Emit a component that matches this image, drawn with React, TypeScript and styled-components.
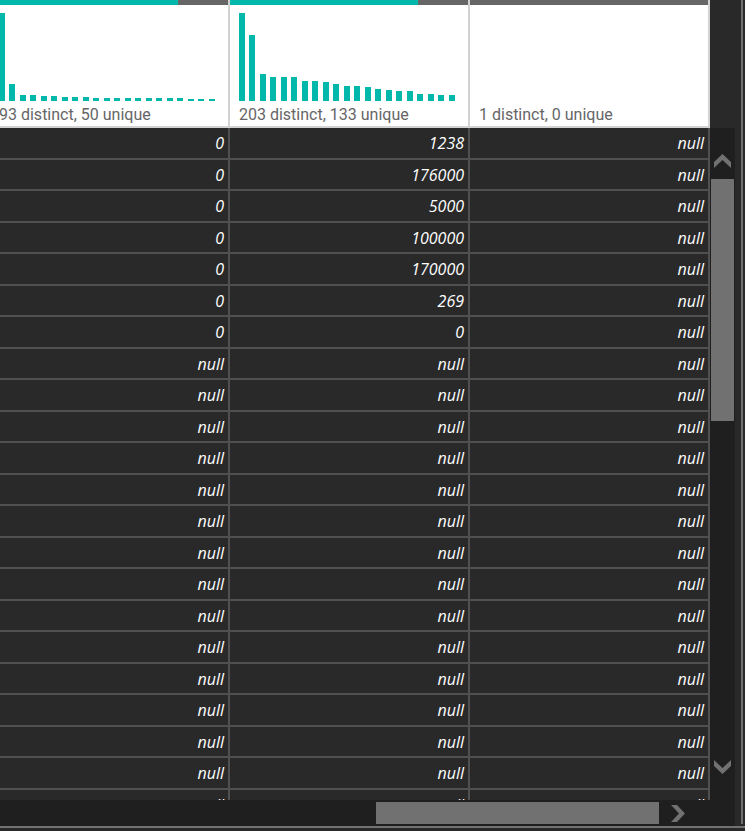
import React from "react";
import styled, { createGlobalStyle } from "styled-components";

const color = {
  surface: "#292929",
  track: "#1f1f1f",
  thumb: "#717171",
  frame: "#717171",
  grid: "#505050",
  headerLine: "#d2d2d2",
  teal: "#01b8aa",
  gray: "#666666",
};

const GlobalStyle = createGlobalStyle`
  *, *::before, *::after { box-sizing: border-box; }
  body { margin: 0; background: ${color.surface}; }
`;

const Page = styled.div`
  display: flex;
  flex-direction: column;
  height: 100vh;
  padding-bottom: 3px;
  overflow: hidden;
  background: ${color.surface};
`;

const Frame = styled.main`
  display: flex;
  flex: 1;
  min-height: 0;
  padding-right: 2px;
  border-bottom: 2px solid ${color.frame};
`;

const Preview = styled.section`
  display: flex;
  flex: 1;
  flex-direction: column;
  min-width: 0;
`;

const FrameEdge = styled.div`
  width: 8px;
  margin-bottom: 2px;
  border-right: 2px solid ${color.frame};
`;

const Body = styled.div`
  display: flex;
  flex: 1;
  min-height: 0;
`;

const Viewport = styled.div`
  display: flex;
  flex: 1;
  justify-content: flex-end;
  min-width: 0;
  overflow: hidden;
`;

const Table = styled.table`
  flex: none;
  align-self: flex-start;
  width: 720px;
  table-layout: fixed;
  border-collapse: separate;
  border-spacing: 0;
`;

const HeaderCell = styled.th`
  height: 128px;
  padding: 0;
  vertical-align: top;
  text-align: left;
  background: #ffffff;
  border-right: 2px solid ${color.headerLine};
  border-bottom: 2px solid ${color.headerLine};
`;

const QualityBar = styled.div<{ $valid: number }>`
  height: 5px;
  background: linear-gradient(to right, ${color.teal} ${(p) => p.$valid}%, ${color.gray} ${(p) => p.$valid}%);
`;

const Chart = styled.svg`
  display: block;
  width: 220px;
  height: 88px;
  margin: 8px 0 0 9px;
  fill: ${color.teal};
`;

const Summary = styled.div`
  padding: 4px 9px 0;
  font: 400 16px/20px Roboto, sans-serif;
  color: ${color.gray};
  white-space: nowrap;
`;

const Row = styled.tr`
  height: 31px;
  &:nth-child(odd) { height: 32px; }
`;

const Cell = styled.td`
  padding: 0 4px 0 0;
  font: italic 500 16px/28px "Open Sans", sans-serif;
  color: #ffffff;
  text-align: right;
  background: ${color.surface};
  border-right: 2px solid ${color.grid};
  border-bottom: 2px solid ${color.grid};
`;

const SideRail = styled.div`
  display: flex;
  flex-direction: column;
  width: 25px;
  padding-top: 128px;
`;

const VerticalBar = styled.div`
  display: flex;
  flex: 1;
  flex-direction: column;
  min-height: 0;
  padding: 26px 1px;
  background: ${color.track};
`;

const HorizontalBar = styled.div`
  display: flex;
  height: 26px;
  padding: 2px 39px 2px 0;
  background: ${color.track};
`;

const ArrowButton = styled.button<{ $side?: boolean }>`
  display: flex;
  flex: none;
  align-items: center;
  justify-content: center;
  width: ${(p) => (p.$side ? "37px" : "23px")};
  height: ${(p) => (p.$side ? "22px" : "14px")};
  padding: 0;
  border: 0;
  background: transparent;
  color: ${color.thumb};
`;

const VerticalTrack = styled.div`
  flex: 1;
  min-height: 0;
  margin: 11px 0;
`;

const VerticalThumb = styled.div`
  height: 42.4%;
  background: ${color.thumb};
`;

const HorizontalTrack = styled.div`
  display: flex;
  flex: 1;
  justify-content: flex-end;
`;

const HorizontalThumb = styled.div`
  width: 43%;
  background: ${color.thumb};
`;

const Icon = styled.svg`
  display: block;
  fill: currentColor;
`;

type Column = { name: string; valid: number; summary: string; bars: number[] };

const columns: Column[] = [
  {
    name: "first",
    valid: 79,
    summary: "93 distinct, 50 unique",
    bars: [88, 17, 6, 6, 5, 5, 4, 4, 4, 3, 3, 3, 3, 3, 3, 3, 3, 3, 2, 2, 2],
  },
  {
    name: "second",
    valid: 79,
    summary: "203 distinct, 133 unique",
    bars: [88, 66, 27, 24, 24, 24, 20, 20, 19, 17, 15, 15, 14, 12, 11, 10, 10, 7, 7, 6, 6],
  },
  { name: "third", valid: 0, summary: "1 distinct, 0 unique", bars: [] },
];

const rows: string[][] = [
  ...["1238", "176000", "5000", "100000", "170000", "269", "0"].map((v) => ["0", v, "null"]),
  ...Array.from({ length: 15 }, () => ["null", "null", "null"]),
];

function Distribution({ bars }: { bars: number[] }) {
  return (
    <Chart viewBox="0 0 220 88" aria-hidden="true" shapeRendering="crispEdges">
      {bars.map((h, i) => (
        <rect key={i} x={Math.floor(i * 10.5)} y={88 - h} width={6} height={h} />
      ))}
    </Chart>
  );
}

export default function App() {
  return (
    <>
      <GlobalStyle />
      <Page>
        <Frame>
          <Preview>
            <Body>
              <Viewport id="preview-grid">
                <Table>
                  <thead>
                    <tr>
                      {columns.map((c) => (
                        <HeaderCell key={c.name} scope="col">
                          <QualityBar $valid={c.valid} />
                          <Distribution bars={c.bars} />
                          <Summary>{c.summary}</Summary>
                        </HeaderCell>
                      ))}
                    </tr>
                  </thead>
                  <tbody>
                    {rows.map((row, r) => (
                      <Row key={r}>
                        {row.map((value, c) => (
                          <Cell key={c}>{value}</Cell>
                        ))}
                      </Row>
                    ))}
                  </tbody>
                </Table>
              </Viewport>
              <SideRail>
                <VerticalBar>
                  <ArrowButton type="button" aria-label="Scroll up">
                    <Icon width="17" height="14" viewBox="0 0 17 14">
                      <path d="M8.5 0L17 8V14L8.5 6L0 14V8Z" />
                    </Icon>
                  </ArrowButton>
                  <VerticalTrack>
                    <VerticalThumb role="scrollbar" aria-label="Rows" aria-controls="preview-grid" aria-orientation="vertical" aria-valuenow={0} />
                  </VerticalTrack>
                  <ArrowButton type="button" aria-label="Scroll down">
                    <Icon width="17" height="14" viewBox="0 0 17 14">
                      <path d="M8.5 14L17 6V0L8.5 8L0 0V6Z" />
                    </Icon>
                  </ArrowButton>
                </VerticalBar>
              </SideRail>
            </Body>
            <HorizontalBar>
              <HorizontalTrack>
                <HorizontalThumb role="scrollbar" aria-label="Columns" aria-controls="preview-grid" aria-orientation="horizontal" aria-valuenow={100} />
              </HorizontalTrack>
              <ArrowButton type="button" aria-label="Scroll right" $side>
                <Icon width="14" height="17" viewBox="0 0 14 17">
                  <path d="M14 8.5L6 17H0L8 8.5L0 0H6Z" />
                </Icon>
              </ArrowButton>
            </HorizontalBar>
          </Preview>
          <FrameEdge />
        </Frame>
      </Page>
    </>
  );
}
